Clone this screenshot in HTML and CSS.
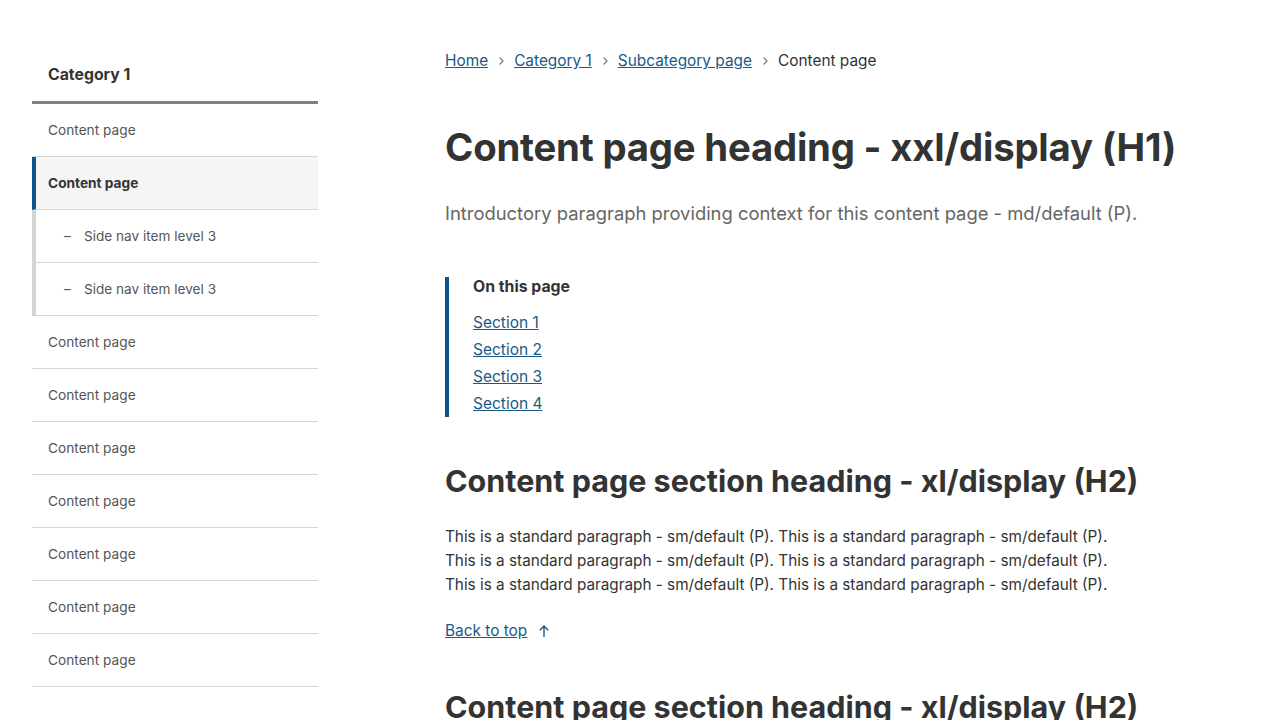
FILE: index.html
```html
<!DOCTYPE html>
<html lang="en">
<head>
<meta charset="utf-8">
<title>Content page</title>
<link rel="stylesheet" href="styles.css">
</head>
<body>
<div class="layout">
  <nav class="sidenav">
    <div class="sidenav-title">Category 1</div>
    <ul class="sidenav-list">
      <li class="item"><a href="#">Content page</a></li>
      <li class="item active"><a href="#">Content page</a></li>
      <li class="item sub"><a href="#"><span class="dash">–</span>Side nav item level 3</a></li>
      <li class="item sub last-sub"><a href="#"><span class="dash">–</span>Side nav item level 3</a></li>
      <li class="item"><a href="#">Content page</a></li>
      <li class="item"><a href="#">Content page</a></li>
      <li class="item"><a href="#">Content page</a></li>
      <li class="item"><a href="#">Content page</a></li>
      <li class="item"><a href="#">Content page</a></li>
      <li class="item"><a href="#">Content page</a></li>
      <li class="item"><a href="#">Content page</a></li>
    </ul>
  </nav>
  <main class="main">
    <ol class="breadcrumb">
      <li><a href="#">Home</a></li>
      <li class="sep"><svg width="8" height="10" viewBox="0 0 8 10"><path d="M2.5 1.5 6 5 2.5 8.5" fill="none" stroke="#777" stroke-width="1.2"/></svg></li>
      <li><a href="#">Category 1</a></li>
      <li class="sep"><svg width="8" height="10" viewBox="0 0 8 10"><path d="M2.5 1.5 6 5 2.5 8.5" fill="none" stroke="#777" stroke-width="1.2"/></svg></li>
      <li><a href="#">Subcategory page</a></li>
      <li class="sep"><svg width="8" height="10" viewBox="0 0 8 10"><path d="M2.5 1.5 6 5 2.5 8.5" fill="none" stroke="#777" stroke-width="1.2"/></svg></li>
      <li class="current">Content page</li>
    </ol>
    <h1 class="h1">Content page heading - xxl/display (H1)</h1>
    <p class="intro">Introductory paragraph providing context for this content page - md/default (P).</p>
    <div class="toc">
      <div class="toc-title">On this page</div>
      <ul class="toc-list">
        <li><a href="#">Section 1</a></li>
        <li><a href="#">Section 2</a></li>
        <li><a href="#">Section 3</a></li>
        <li><a href="#">Section 4</a></li>
      </ul>
    </div>
    <h2 class="h2">Content page section heading - xl/display (H2)</h2>
    <p class="para">This is a standard paragraph - sm/default (P). This is a standard paragraph - sm/default (P). This is a standard paragraph - sm/default (P). This is a standard paragraph - sm/default (P). This is a standard paragraph - sm/default (P). This is a standard paragraph - sm/default (P).</p>
    <a class="backtop" href="#"><span class="bt-text">Back to top</span><svg width="12" height="14" viewBox="0 0 12 14"><path d="M6 13V2M1.8 6.2 6 2l4.2 4.2" fill="none" stroke="#1a5a87" stroke-width="1.4"/></svg></a>
    <h2 class="h2 second">Content page section heading - xl/display (H2)</h2>
  </main>
</div>
</body>
</html>
```
FILE: styles.css
```css
* { box-sizing: border-box; }
html, body { margin: 0; padding: 0; }
body {
  font-family: Inter, "Noto Sans", sans-serif;
  color: #333;
  background: #fff;
  overflow: hidden;
  height: 720px;
}
a { color: #1a5a87; }
.layout {
  display: flex;
  padding: 0 0 0 32px;
}
.sidenav {
  width: 286px;
  flex: 0 0 286px;
  padding-top: 52px;
}
.sidenav-title {
  font-size: 15.8px;
  font-weight: 700;
  color: #333;
  padding: 13px 16px 16px;
  border-bottom: 3px solid #808080;
  line-height: 20px;
}
.sidenav-list { list-style: none; margin: 0; padding: 0; }
.item {
  border-bottom: 1px solid #d6d6d6;
  height: 53px;
  display: flex;
  align-items: center;
}
.item a {
  color: #555;
  text-decoration: none;
  font-size: 13.7px;
  padding-left: 16px;
  display: flex;
  align-items: center;
  width: 100%;
  height: 100%;
}
.item.active {
  background: #f5f5f5;
  border-left: 4px solid #0b5687;
}
.item.active a {
  color: #333;
  font-weight: 700;
  padding-left: 12px;
}
.item.sub {
  border-left: 4px solid #d4d4d4;
  border-bottom: none;
  position: relative;
}
.item.sub::after {
  content: "";
  position: absolute;
  left: 0;
  right: 0;
  bottom: 0;
  border-bottom: 1px solid #d6d6d6;
}
.item.sub.last-sub::after { left: -4px; }
.item.sub a { padding-left: 28px; font-size: 13.6px; padding-bottom: 1px; }
.dash { display: inline-block; width: 20px; color: #555; }
.main {
  margin-left: 127px;
  padding-top: 50px;
  flex: 1;
}
.breadcrumb {
  list-style: none;
  margin: 0;
  padding: 0;
  display: flex;
  align-items: center;
  font-size: 15.4px;
  line-height: 22px;
}
.breadcrumb .sep {
  width: 26px;
  display: flex;
  justify-content: center;
  align-items: center;
}
.breadcrumb .current { color: #333; }
.h1 {
  font-size: 38.3px;
  font-weight: 700;
  line-height: 48px;
  margin: 51px 0 0;
  color: #333;
  letter-spacing: -0.2px;
}
.intro {
  font-size: 18.4px;
  line-height: 28px;
  color: #666;
  margin: 28px 0 0;
}
.toc {
  margin-top: 50px;
  border-left: 4px solid #0b5687;
  padding: 0 0 0 24px;
}
.toc-title {
  font-size: 15.8px;
  font-weight: 700;
  line-height: 20px;
  padding-top: 0;
  margin-bottom: 12px;
}
.toc-list { list-style: none; margin: 0; padding: 0; }
.toc-list li {
  font-size: 15.5px;
  line-height: 27px;
}
.h2 {
  font-size: 30.5px;
  font-weight: 700;
  line-height: 40px;
  margin: 44px 0 0;
  color: #333;
}
.para {
  font-size: 15.3px;
  line-height: 24px;
  margin: 24px 0 0;
  max-width: 680px;
}
.backtop {
  display: inline-flex;
  align-items: center;
  margin-top: 24px;
  font-size: 15.4px;
  gap: 11px;
}
.bt-text { text-decoration: underline; }
.h2.second { margin-top: 47px; }
```
